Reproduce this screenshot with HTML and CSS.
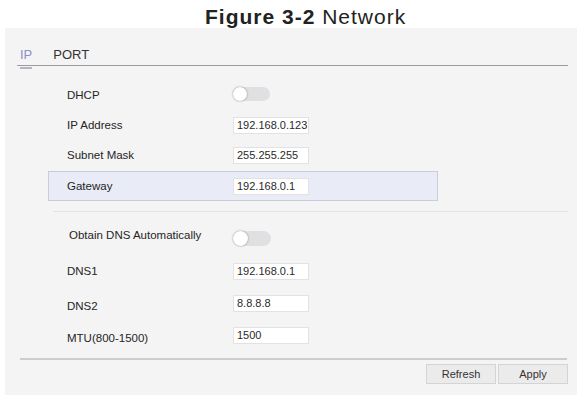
FILE: index.html
```html
<!DOCTYPE html>
<html>
<head>
<meta charset="utf-8">
<link rel="stylesheet" href="styles.css">
</head>
<body>
<div class="title"><b>Figure 3-2</b> Network</div>
<div class="panel">
  <div class="tabs">
    <span class="tab active">IP</span>
    <span class="tab">PORT</span>
  </div>
  <div class="form">
    <div class="row first">
      <span class="label">DHCP</span>
      <span class="toggle"><span class="knob"></span></span>
    </div>
    <div class="row">
      <span class="label">IP Address</span>
      <span class="input">192.168.0.123</span>
    </div>
    <div class="row">
      <span class="label">Subnet Mask</span>
      <span class="input">255.255.255</span>
    </div>
    <div class="row hl">
      <span class="label">Gateway</span>
      <span class="input">192.168.0.1</span>
    </div>
  </div>
  <div class="sep"></div>
  <div class="form">
    <div class="row obtain">
      <span class="label up">Obtain DNS Automatically</span>
      <span class="toggle big"><span class="knob"></span></span>
    </div>
    <div class="row tall">
      <span class="label">DNS1</span>
      <span class="input">192.168.0.1</span>
    </div>
    <div class="row tall">
      <span class="label down">DNS2</span>
      <span class="input">8.8.8.8</span>
    </div>
    <div class="row tall">
      <span class="label down2">MTU(800-1500)</span>
      <span class="input">1500</span>
    </div>
  </div>
  <div class="bottomline"></div>
  <div class="actions">
    <span class="btn">Refresh</span>
    <span class="btn">Apply</span>
  </div>
</div>
</body>
</html>
```
FILE: styles.css
```css
html, body {
  margin: 0;
  padding: 0;
  background: #ffffff;
  font-family: "Liberation Sans", Arial, sans-serif;
}
.title {
  height: 28px;
  box-sizing: border-box;
  padding: 5px 0 0 205px;
  font-size: 21px;
  line-height: 23px;
  letter-spacing: 1px;
  color: #222;
  white-space: nowrap;
}
.title b {
  font-weight: bold;
}
.panel {
  margin-left: 5px;
  width: 572px;
  height: 367px;
  background: #f4f4f4;
  box-sizing: border-box;
}
.tabs {
  margin: 0 9px 0 12px;
  height: 37px;
  border-bottom: 1px solid #9c9c9c;
  display: flex;
  align-items: flex-end;
  gap: 21px;
  padding-left: 3px;
}
.tab {
  font-size: 13px;
  line-height: 15px;
  padding-bottom: 3px;
  color: #333;
  position: relative;
}
.tab.active {
  color: #8d90c4;
}
.tab.active::after {
  content: "";
  position: absolute;
  left: 0;
  right: 0;
  bottom: -4px;
  height: 2px;
  background: #b4b6c4;
}
.form {
  padding-left: 43px;
}
.row {
  width: 390px;
  height: 30px;
  box-sizing: border-box;
  padding-left: 19px;
  display: grid;
  grid-template-columns: 166px auto;
  align-items: center;
}
.row.first {
  margin-top: 14px;
}
.row.hl {
  margin-top: 1px;
  background: #e9ecf6;
  border: 1px solid #c9cdd9;
  padding-left: 18px;
}
.row.obtain {
  height: 36px;
  padding-left: 21px;
  grid-template-columns: 164px auto;
}
.row.tall {
  height: 32px;
}
.label {
  font-size: 11.5px;
  color: #252525;
  white-space: nowrap;
}
.label.up {
  margin-top: -4px;
}
.label.down {
  margin-top: 5px;
}
.label.down2 {
  margin-top: 6px;
}
.input {
  width: 76px;
  height: 17px;
  box-sizing: border-box;
  background: #fff;
  border: 1px solid #e2e2e2;
  font-size: 11px;
  line-height: 15px;
  padding-left: 3px;
  color: #2a2a2a;
}
.toggle {
  width: 37px;
  height: 14px;
  border-radius: 8px;
  background: #e0e0e3;
  position: relative;
  margin-top: -3px;
}
.toggle.big {
  height: 15px;
  width: 38px;
  margin-top: 2px;
}
.knob {
  position: absolute;
  left: 0;
  top: 0;
  width: 14px;
  height: 14px;
  border-radius: 50%;
  background: #fff;
  box-shadow: 0 0 2px rgba(0,0,0,0.45);
}
.toggle.big .knob {
  width: 15px;
  height: 15px;
}
.sep {
  margin: 10px 9px 7px 48px;
  height: 1px;
  background: #e3e3e3;
}
.bottomline {
  margin: 7px 10px 0 15px;
  height: 2px;
  background: #cdcdcd;
}
.actions {
  display: flex;
  justify-content: flex-end;
  gap: 2px;
  margin: 4px 9px 0 0;
}
.btn {
  width: 70px;
  height: 20px;
  box-sizing: border-box;
  background: #ebebeb;
  border: 1px solid #d4d4d4;
  font-size: 11px;
  line-height: 18px;
  text-align: center;
  color: #333;
}
```
